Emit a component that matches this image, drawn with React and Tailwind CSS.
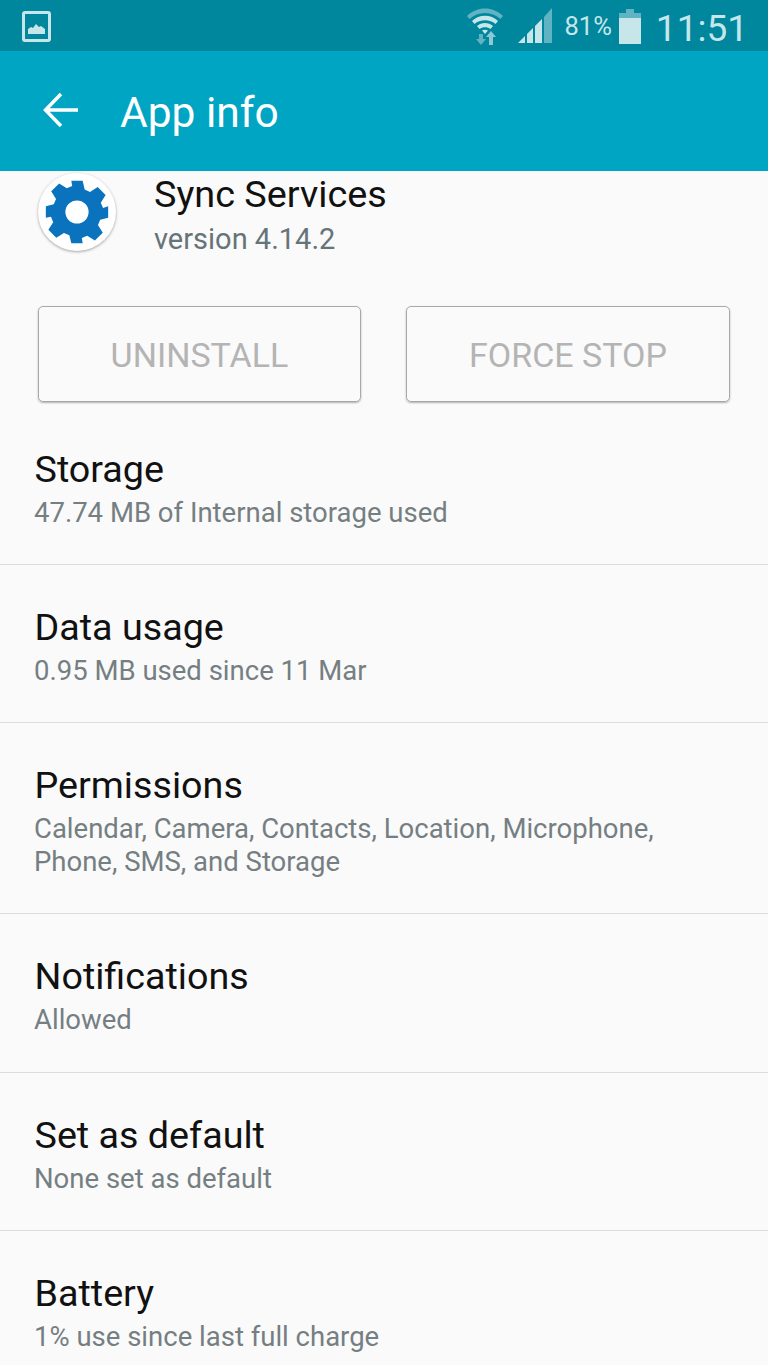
import React from "react";

const rows = [
  { title: "Storage", sub: ["47.74 MB of Internal storage used"] },
  { title: "Data usage", sub: ["0.95 MB used since 11 Mar"] },
  { title: "Permissions", sub: ["Calendar, Camera, Contacts, Location, Microphone,", "Phone, SMS, and Storage"] },
  { title: "Notifications", sub: ["Allowed"] },
  { title: "Set as default", sub: ["None set as default"] },
  { title: "Battery", sub: ["1% use since last full charge"] },
];

const StatusBar = () => (
  <div className="h-[51px] bg-[#00879e] flex items-center pl-[22px] pr-[20px] text-[#c6e6ea]">
    <svg width="29" height="31" viewBox="0 0 29 31" className="mt-[1px]">
      <rect x="1.5" y="1.5" width="26" height="28" rx="1.5" fill="none" stroke="#c6e6ea" strokeWidth="3" />
      <path d="M6 23v-5l3-2 2 1 3-4 3 3 2-1 4 3v5z" fill="#c6e6ea" />
    </svg>
    <div className="ml-auto flex items-center">
      <svg width="36" height="38" viewBox="0 0 36 38">
        <path d="M0 9C10 -1 26 -1 36 9l-2.500 3C25 4 11 4 2.500 12z" fill="#5fb3c2" />
        <path d="M5 14c7-7 19-7 26 0l-2.500 3c-5.500-5-15.500-5-21 0z" fill="#c6e6ea" />
        <path d="M10 19c4.500-4 11.500-4 16 0l-2.500 3c-3-2.500-8-2.500-11 0z" fill="#c6e6ea" />
        <path d="M15 23.500c2-1 4-1 6 0l-3 3.500z" fill="#c6e6ea" />
        <path d="M13 27v5h-3l5 6 5-6h-3v-5z" fill="#5fb3c2" transform="translate(-1 0)" />
        <path d="M22 38v-8h-3l5-6 5 6h-3v8z" fill="#8cc9d4" />
      </svg>
      <svg width="34" height="36" viewBox="0 0 34 36" className="ml-[15px] mt-[1px]">
        <path d="M0 35l7-7v7z" fill="#c6e6ea" />
        <path d="M9 26l6-6v15H9z" fill="#c6e6ea" />
        <path d="M17 18l7-7v24h-7z" fill="#c6e6ea" />
        <path d="M26 9l8-9v35h-8z" fill="#5fb3c2" />
      </svg>
      <span className="ml-[13px] text-[25.5px] leading-none mt-[2px]">81%</span>
      <svg width="22" height="35" viewBox="0 0 22 35" className="ml-[7px] mt-[1px]">
        <path d="M7 0h8v4h7v5H0V4h7z" fill="#5fb3c2" />
        <rect x="0" y="9" width="22" height="26" fill="#c6e6ea" />
      </svg>
      <span className="ml-[15px] text-[37px] leading-none mt-[5px]">11:51</span>
    </div>
  </div>
);

const App = () => (
  <div className="w-[768px] h-[1365px] overflow-hidden bg-[#fafafa] font-['Roboto',sans-serif]">
    <StatusBar />
    <div className="h-[120px] bg-[#00a5c3] flex items-center pl-[43px] text-white">
      <svg width="36" height="36" viewBox="0 0 36 36" fill="none" stroke="white" strokeWidth="3.5" className="mb-[2px]">
        <path d="M35 18H3M18 2L2.500 18 18 34" />
      </svg>
      <span className="ml-[41px] text-[42.5px] leading-none mt-[5px]">App info</span>
    </div>
    <div className="flex pl-[38px] pt-[2px] h-[135px]">
      <div className="w-[78px] h-[78px] rounded-full bg-white shadow-[0_1px_3px_rgba(0,0,0,0.35)] flex items-center justify-center">
        <svg width="68" height="68" viewBox="0 0 24 24">
          <path
            fill="#0b72bd"
            fillRule="evenodd"
            d="M10 1h4l.7 3.100 1.900.8 2.700-1.700 2.800 2.800-1.700 2.700.8 1.900L23 10v4l-2.800.7-.8 1.900 1.700 2.700-2.800 2.800-2.700-1.700-1.900.8L14 23h-4l-.7-2.800-1.900-.8-2.700 1.700-2.800-2.800 1.700-2.700-.8-1.900L1 14v-4l2.800-.7.8-1.900-1.700-2.700 2.800-2.800 2.700 1.700 1.900-.8zM12 7.900a4.100 4.100 0 1 0 0 8.200 4.100 4.100 0 0 0 0-8.200z"
          />
        </svg>
      </div>
      <div className="ml-[38px] mt-[-2px]">
        <div className="text-[37.8px] leading-[46px] text-[#111]">Sync Services</div>
        <div className="text-[29px] leading-[44px] text-[#667478]">version 4.14.2</div>
      </div>
    </div>
    <div className="flex justify-between pl-[38px] pr-[38px]">
      <div className="w-[323px] h-[96px] pt-[2px] border border-[#a9a9a9] rounded-[5px] shadow-[0_1px_2px_rgba(0,0,0,0.3)] flex items-center justify-center text-[34px] text-[#b4b4b4]">
        UNINSTALL
      </div>
      <div className="w-[324px] h-[96px] pt-[2px] border border-[#a9a9a9] rounded-[5px] shadow-[0_1px_2px_rgba(0,0,0,0.3)] flex items-center justify-center text-[34px] text-[#b4b4b4]">
        FORCE STOP
      </div>
    </div>
    <div className="mt-[5px]">
      {rows.map((row) => (
        <div key={row.title} className="pl-[34.500px] pr-[35px] pt-[39px] pb-[35.150px] border-b border-[#dcdcdc]">
          <div className="text-[37.7px] leading-[46px] mb-[4px] text-[#111]">{row.title}</div>
          {row.sub.map((line) => (
            <div key={line} className="text-[27.5px] leading-[33px] ml-[-0.5px] text-[#757f82]">
              {line}
            </div>
          ))}
        </div>
      ))}
    </div>
  </div>
);

export default App;
